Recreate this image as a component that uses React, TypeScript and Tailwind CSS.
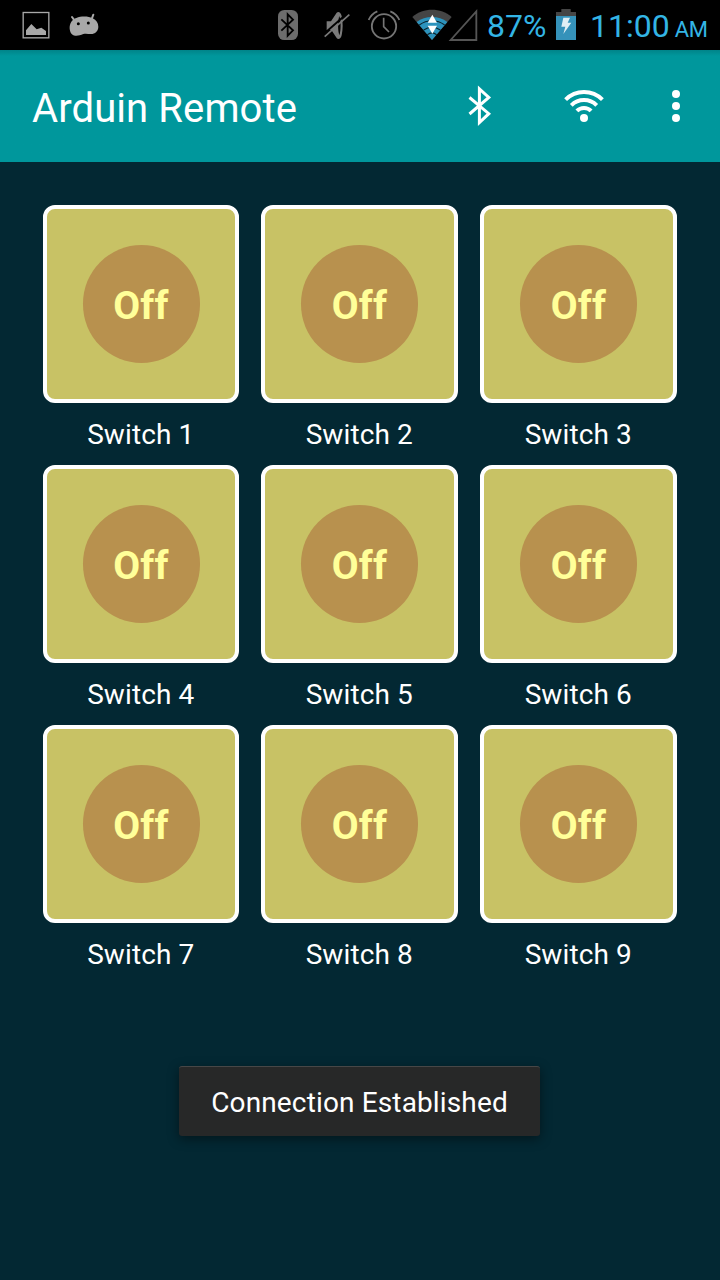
type SwitchItem = {
  id: number;
  label: string;
  state: "On" | "Off";
};

const switches: SwitchItem[] = Array.from({ length: 9 }, (_, i) => ({
  id: i + 1,
  label: `Switch ${i + 1}`,
  state: "Off",
}));

// Status bar icons share a 150 unit tall viewBox (3 units per pixel)
function PictureIcon() {
  return (
    <svg className="h-[50px] w-[28px]" viewBox="66 0 84 150">
      <rect x="69.5" y="37.5" width="77" height="76" fill="none" stroke="#a8a8a8" strokeWidth="4" />
      <path d="M78 105V91L94 72L110 88L124 83L138 93V105Z" fill="#a8a8a8" />
    </svg>
  );
}

function AndroidIcon() {
  return (
    <svg className="h-[50px] w-[30px]" viewBox="207 0 90 150">
      <path d="M216 51L224 62M280 44L274 60" stroke="#a8a8a8" strokeWidth="6" strokeLinecap="round" />
      <path
        d="M209 86C208 70 217 58 229 54C243 48 265 48 278 55C289 60 295 69 295 80C295 93 285 102 273 102C264 102 258 100 250 102C241 105 234 108 226 107C215 106 210 97 209 86Z"
        fill="#a8a8a8"
      />
      <circle cx="235" cy="71" r="4.5" fill="#000" />
      <circle cx="265" cy="69" r="4.5" fill="#000" />
    </svg>
  );
}

function StatusBluetoothIcon() {
  return (
    <svg className="h-[50px] w-[20px]" viewBox="54 0 60 150">
      <rect x="54" y="30" width="60" height="90" rx="19" fill="#6c6c6c" />
      <path d="M64 58L99 91L83 107V43L99 59L64 92" fill="none" stroke="#000" strokeWidth="5.5" />
    </svg>
  );
}

function MutedIcon() {
  return (
    <svg className="h-[50px] w-[26px]" viewBox="191 0 78 150">
      <path d="M199 64H212L229 38C234 34 241 36 244 48C248 66 248 88 244 106C241 118 233 119 229 114L213 90H199Z" fill="#7a7a7a" />
      <path d="M237 48C242 62 242 92 237 106C232 92 232 62 237 48Z" fill="#000" />
      <path d="M188 104L262 39" stroke="#000" strokeWidth="6" />
      <path d="M193 110L267 44" stroke="#7a7a7a" strokeWidth="5" />
    </svg>
  );
}

function AlarmIcon() {
  return (
    <svg className="h-[50px] w-[32px]" viewBox="324 0 96 150" fill="none" stroke="#757575">
      <circle cx="372" cy="79" r="36.5" strokeWidth="5.5" />
      <path d="M371 53V80L387 96" strokeWidth="5" />
      <path d="M326 60C331 48 339 39 352 34M391 34C404 39 413 48 418 60" strokeWidth="5.5" />
    </svg>
  );
}

function SignalIcons() {
  return (
    <svg className="h-[50px] w-[67px]" viewBox="455 0 201 150">
      <path d="M515 120L456 51C489 22 541 22 574 51Z" fill="#454545" />
      <path d="M515 120L469 66C495 46 535 46 561 66Z" fill="#2c93bd" />
      <path d="M477 75C500 58 530 58 553 75M490 90C505 79 525 79 540 90M501 104C510 97 520 97 529 104" fill="none" stroke="#0b2630" strokeWidth="3.5" />
      <path d="M516 44L530 68H502Z" fill="#fff" />
      <path d="M516 101L530 77H502Z" fill="#fff" />
      <path d="M571 120H648V34Z" fill="none" stroke="#555" strokeWidth="5.5" />
    </svg>
  );
}

function BatteryIcon() {
  return (
    <svg className="h-[50px] w-[20px] shrink-0" viewBox="228 0 60 150">
      <path d="M228 36H244V27H272V36H288V48H228Z" fill="#454545" />
      <rect x="228" y="48" width="60" height="72" fill="#3592ba" />
      <path d="M250 53H270L263 68H274L250 102L256 80H244Z" fill="#e0eef4" />
    </svg>
  );
}

function StatusBar() {
  return (
    <div className="flex h-[50px] items-center bg-black text-[#33b5e5]">
      <div className="ml-[22px] flex gap-[19px]">
        <PictureIcon />
        <AndroidIcon />
      </div>
      <div className="ml-[179px] flex">
        <StatusBluetoothIcon />
        <div className="ml-[26px] flex">
          <MutedIcon />
        </div>
        <div className="ml-[18px] flex">
          <AlarmIcon />
        </div>
        <div className="ml-[12px] flex">
          <SignalIcons />
        </div>
      </div>
      <span className="ml-[8px] w-[69px] shrink-0 whitespace-nowrap pt-[2px] text-[32px] leading-[38px]">87%</span>
      <BatteryIcon />
      <span className="ml-[14px] flex shrink-0 items-baseline whitespace-nowrap pt-[2px] text-[32px] leading-[38px]">
        11:00<span className="ml-[5px] text-[22px] leading-none tracking-[-0.3px]">AM</span>
      </span>
    </div>
  );
}

function AppBar() {
  return (
    <header className="flex h-28 items-center bg-[#00979c] bg-linear-to-b from-[#008489] to-[#00979c] to-[6px] text-white">
      <h1 className="ml-8 w-[424px] pt-[5px] text-[40px] leading-[48px] tracking-[0.1px] whitespace-nowrap">
        Arduin Remote
      </h1>
      <button type="button" aria-label="Bluetooth">
        <svg className="h-12 w-12" viewBox="456 82 48 48" fill="none" stroke="currentColor" strokeWidth="3">
          <path d="M469.5 97.5L488.8 113.7L479.4 122.6V88.9L488.8 97.5L469.5 114" />
        </svg>
      </button>
      <button type="button" aria-label="Wi-Fi" className="ml-[56px]">
        <svg className="h-12 w-12" viewBox="560 82 48 48" fill="none" stroke="currentColor" strokeWidth="4">
          <path d="M565.6 99.6A26 26 0 0 1 602.4 99.6M571.3 105.3A18 18 0 0 1 596.7 105.3M576.9 110.9A10 10 0 0 1 591.1 110.9" />
          <circle cx="584" cy="118" r="4" fill="currentColor" stroke="none" />
        </svg>
      </button>
      <button type="button" aria-label="More options" className="ml-[44px]">
        <svg className="h-12 w-12" viewBox="652 82 48 48" fill="currentColor">
          <circle cx="676" cy="94" r="4" />
          <circle cx="676" cy="106" r="4" />
          <circle cx="676" cy="118" r="4" />
        </svg>
      </button>
    </header>
  );
}

function SwitchTile({ item }: { item: SwitchItem }) {
  return (
    <div className="flex h-[260px] flex-col items-center">
      <button
        type="button"
        className="flex h-[198px] w-full items-center justify-center rounded-xl border-4 border-white bg-[#c8c265]"
      >
        <span className="flex h-[118px] w-[117px] items-center justify-center rounded-full bg-[#b8914e] pt-[4px] text-[39px] font-bold tracking-[0.3px] text-[#ffff99]">
          {item.state}
        </span>
      </button>
      <span className="mt-[15px] mr-[0.5px] text-[28px] leading-[33px] tracking-[0.1px] text-white">{item.label}</span>
    </div>
  );
}

export default function App() {
  return (
    <div className="flex h-[1280px] w-[720px] flex-col overflow-hidden bg-[#032833] font-['Roboto',sans-serif]">
      <StatusBar />
      <AppBar />
      <main className="flex flex-1 flex-col items-center">
        <div className="mt-[43px] grid w-[634px] grid-cols-[196px_197px_197px] gap-x-[22px]">
          {switches.map((item) => (
            <SwitchTile key={item.id} item={item} />
          ))}
        </div>
        {/* Toast */}
        <div className="mt-[81px] mr-px flex h-[70px] w-[361px] items-center justify-center rounded-[3px] border-t border-[#474747] bg-[#272828] pt-[2px] text-[28px] tracking-[0.14px] text-white shadow-[0_3px_12px_rgba(0,0,0,0.45)]">
          Connection Established
        </div>
      </main>
    </div>
  );
}
